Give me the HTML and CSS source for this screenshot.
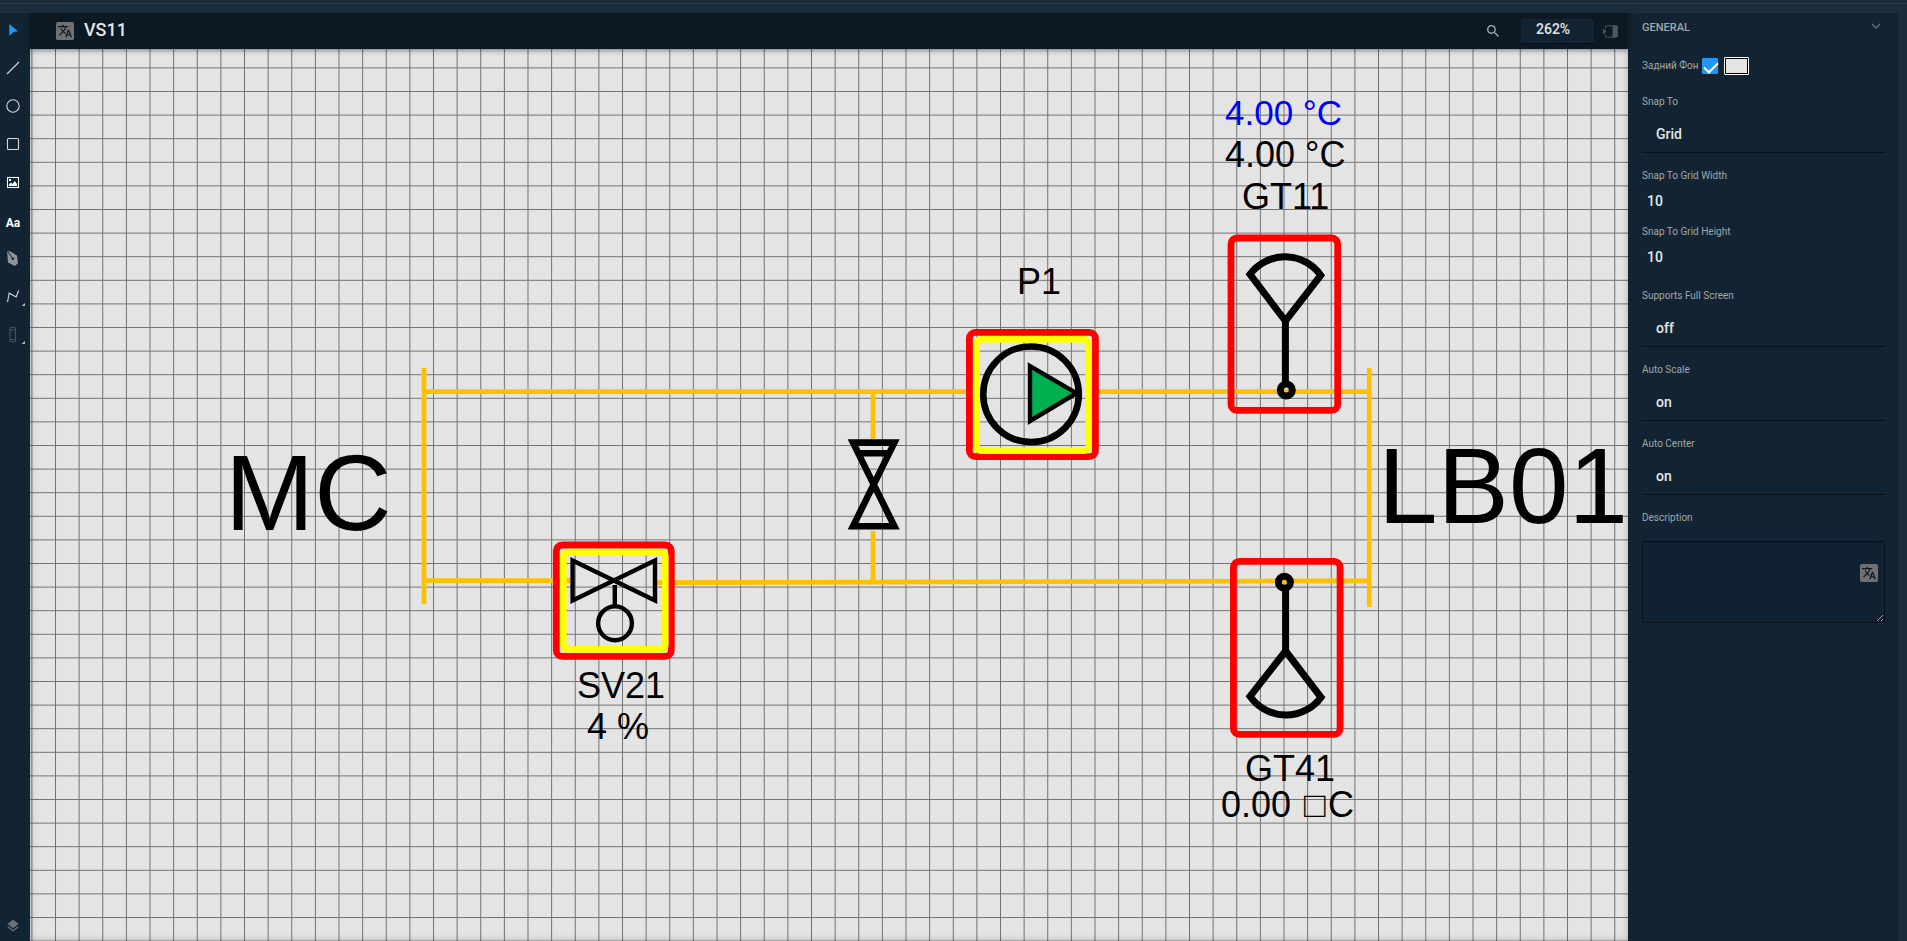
FILE: index.html
```html
<!DOCTYPE html>
<html lang="en">
<head>
<meta charset="utf-8">
<title>VS11</title>
<link rel="stylesheet" href="styles.css">
</head>
<body>
<svg class="defs" aria-hidden="true">
  <symbol id="translate" viewBox="0 0 24 24">
    <rect class="translate-bg" width="24" height="24" rx="2.5"/>
    <path transform="translate(2 2) scale(.84)" d="M12.87 15.07l-2.54-2.51.03-.03c1.74-1.94 2.98-4.17 3.71-6.53H17V4h-7V2H8v2H1v1.99h11.17C11.5 7.92 10.44 9.75 9 11.35 8.07 10.32 7.3 9.19 6.69 8h-2c.73 1.63 1.73 3.17 2.98 4.56l-5.09 5.02L4 19l5-5 3.11 3.11.76-2.04zM18.5 10h-2L12 22h2l1.12-3h4.75L21 22h2l-4.5-12zm-2.62 7l1.62-4.33L19.12 17h-3.24z"/>
  </symbol>
</svg>
<div class="top-strip"></div>
<div class="editor">
  <nav class="tools" aria-label="Tools">
    <button class="tool" aria-label="Select"><svg viewBox="0 0 30 30"><path class="accent" d="M9.3 9L18 16.2L13.6 17L9.3 20.8Z"/></svg></button>
    <button class="tool" aria-label="Line"><svg viewBox="0 0 30 30"><path class="stroke" d="M7 21L19 9"/></svg></button>
    <button class="tool" aria-label="Ellipse"><svg viewBox="0 0 30 30"><circle class="stroke" cx="13" cy="15" r="6.2"/></svg></button>
    <button class="tool" aria-label="Rectangle"><svg viewBox="0 0 30 30"><rect class="stroke" x="7.5" y="9.5" width="11" height="11" rx="1"/></svg></button>
    <button class="tool" aria-label="Image"><svg viewBox="0 0 30 30"><rect class="stroke strong" x="7.5" y="10.5" width="11" height="10"/><path class="solid" d="M9 19V17.5L11 15.5L12.5 17L14.8 14L17 17V19ZM9 12h2v2h-2z"/></svg></button>
    <button class="tool tool-text" aria-label="Text">Aa</button>
    <button class="tool" aria-label="Pen"><svg viewBox="0 0 30 30"><path class="muted" d="M7.2 7.6L9.6 7L17 11.6L18 19.2L14.8 22L8 18.6Z"/><path class="cut" d="M8 7.8L12.6 14.4"/><circle class="cut-dot" cx="12.8" cy="14.8" r="1.3"/></svg></button>
    <button class="tool" aria-label="Polyline"><svg viewBox="0 0 30 30"><path class="stroke" d="M7.5 20L9.2 11.2L16.2 15L18.6 8.5"/><path class="corner" d="M25 21V24H21.5Z"/></svg></button>
    <button class="tool" aria-label="Pipe"><svg viewBox="0 0 30 30"><rect class="stroke dim" x="10" y="7.5" width="5.5" height="14.5" rx="1.5"/><path class="stroke dim" d="M10 10H15.5M10 19.5H15.5"/><path class="corner" d="M25 21V24H21.5Z"/></svg></button>
    <button class="tool tool-last" aria-label="Layers"><svg viewBox="0 0 30 30"><path class="layer" d="M13 8.5L18.5 13L13 17.3L7.5 13Z"/><path class="layer-line" d="M7.8 15.8L13 19.8L18.2 15.8"/></svg></button>
  </nav>
  <main class="workspace">
    <header class="bar">
      <svg class="translate"><use href="#translate"/></svg>
      <h1 class="title">VS11</h1>
      <button class="search" aria-label="Search"><svg viewBox="3 3 17.5 17.5"><path d="M15.5 14h-.79l-.28-.27C15.41 12.59 16 11.11 16 9.5 16 5.91 13.09 3 9.5 3S3 5.91 3 9.5 5.91 16 9.5 16c1.61 0 3.09-.59 4.23-1.57l.27.28v.79l5 4.99L20.49 19l-4.99-5zm-6 0C7.01 14 5 11.99 5 9.5S7.01 5 9.5 5 14 7.01 14 9.5 11.99 14 9.5 14z"/></svg></button>
      <input class="zoom" type="text" value="262%" aria-label="Zoom">
      <button class="dock" aria-label="Toggle panel"><svg viewBox="0 0 15 13"><path class="dock-frame" d="M2.5 3.5V1.5Q2.5 .8 3.5 .8H13Q14.2 .8 14.2 2V11Q14.2 12.2 13 12.2H3.5Q2.5 12.2 2.5 11.5V9.5"/><path class="dock-fill" d="M9.5 1h5v11h-5zM0 3.5l3.5 3L0 9.5z"/></svg></button>
    </header>
    <div class="canvas">
      <svg class="drawing" role="img" aria-label="Heating circuit VS11">
        <defs>
          <pattern id="grid" width="10" height="10" patternUnits="userSpaceOnUse" patternTransform="translate(25 42) scale(2.3625 2.36)">
            <path class="grid-line" d="M0 .212H10M.212 0V10"/>
          </pattern>
        </defs>
        <rect width="100%" height="100%" fill="url(#grid)"/>
        <g transform="translate(-30 -49)">
          <g class="pipe">
            <path d="M424 391.7H968M1097 391.7H1369M424 580.7H572M657 582.7L1180 581.3L1369 580.7M873 392V440M873 531V582M424 368V604.3M1369.3 368V607"/>
          </g>
          <g class="ink">
            <path class="w65" d="M853 442.6H894.4L853 526.3H894.4ZM859 453.3H888"/>
          </g>
          <g>
            <rect class="frame-red" x="556.3" y="545" width="115" height="111.4" rx="6"/>
            <rect class="frame-yellow" x="563.3" y="552" width="102" height="97.4" rx="4"/>
            <path class="pipe" d="M566.7 580.7H571"/>
            <g class="ink w43"><path d="M572.6 560.6V600.4L655 560.6V600.4ZM614.8 585V606"/><circle cx="615" cy="623.3" r="16.9"/></g>
          </g>
          <g>
            <rect class="frame-red" x="969.4" y="332.3" width="126" height="124.4" rx="6"/>
            <rect class="frame-yellow" x="976.6" y="339.4" width="112" height="111.3" rx="4"/>
            <circle class="ink w65" cx="1031" cy="394.3" r="47.8"/>
            <path class="rotor" d="M1030 366V421L1076.5 393.2Z"/>
          </g>
          <g>
            <rect class="frame-red" x="1231" y="238" width="106.7" height="172.4" rx="6"/>
            <path class="ink w7" d="M1285.4 321L1250 274.3A43.7 43.7 0 0 1 1320.7 275.3ZM1285.4 320V384"/>
            <circle class="ink w7" cx="1286.3" cy="390" r="6"/>
          </g>
          <g>
            <rect class="frame-red" x="1233.4" y="561.4" width="106.7" height="173" rx="6"/>
            <path class="ink w7" d="M1285.6 651L1250 696.3A43.7 43.7 0 0 0 1321 697.3ZM1285.6 652V589"/>
            <circle class="ink w7" cx="1284.4" cy="582.3" r="6"/>
          </g>
          <g class="label">
            <text class="setpoint" x="1225" y="125">4.00 °C</text>
            <text x="1225" y="167">4.00 °C</text>
            <text x="1242" y="209">GT11</text>
            <text x="1017" y="294">P1</text>
            <text x="577" y="698">SV21</text>
            <text x="587" y="739">4 %</text>
            <text x="1245" y="781">GT41</text>
            <text x="1221" y="817">0.00 <tspan x="1304">□</tspan><tspan x="1328">C</tspan></text>
          </g>
          <g class="label label-big">
            <text x="225" y="530">MC</text>
            <text x="1378" y="523">LB01</text>
          </g>
        </g>
      </svg>
    </div>
  </main>
  <aside class="panel">
    <div class="panel-head">
      <h2 class="panel-title">GENERAL</h2>
      <button class="collapse" aria-label="Collapse"><svg viewBox="0 0 10 6"><path d="M1 1L5 5L9 1"/></svg></button>
    </div>
    <div class="bg-row">
      <label for="bg-on">Задний Фон</label>
      <input class="check" id="bg-on" type="checkbox" checked>
      <input class="swatch" type="color" value="#e4e4e4" aria-label="Background colour">
    </div>
    <div class="field">
      <label for="snap">Snap To</label>
      <select id="snap"><option>Grid</option></select>
    </div>
    <div class="field number">
      <label for="gw">Snap To Grid Width</label>
      <input id="gw" type="text" value="10">
    </div>
    <div class="field number last">
      <label for="gh">Snap To Grid Height</label>
      <input id="gh" type="text" value="10">
    </div>
    <div class="field">
      <label for="full">Supports Full Screen</label>
      <select id="full"><option>off</option></select>
    </div>
    <div class="field">
      <label for="scale">Auto Scale</label>
      <select id="scale"><option>on</option></select>
    </div>
    <div class="field">
      <label for="center">Auto Center</label>
      <select id="center"><option>on</option></select>
    </div>
    <div class="field">
      <label for="desc">Description</label>
      <div class="area">
        <textarea id="desc"></textarea>
        <svg class="translate area-icon"><use href="#translate"/></svg>
      </div>
    </div>
  </aside>
</div>
</body>
</html>
```
FILE: styles.css
```css
* { box-sizing: border-box; }

body {
  margin: 0;
  min-height: 100vh;
  display: flex;
  flex-direction: column;
  background: #1b2d3b;
  color: #e4e7e9;
  font: 500 14px/20px Roboto, sans-serif;
}

button {
  padding: 0;
  border: 0;
  background: none;
  color: inherit;
  font: inherit;
}

.defs { position: absolute; width: 0; height: 0; }

.top-strip {
  height: 13px;
  padding-top: 3px;
}
.top-strip::before {
  content: "";
  display: block;
  height: 1px;
  background: #2c3e4b;
}

.editor {
  flex: 1;
  display: flex;
  padding-right: 9px;
}

/* tools */
.tools {
  width: 30px;
  padding-top: 2px;
  display: flex;
  flex-direction: column;
  gap: 8px;
  background: #122431;
}
.tool { height: 30px; }
.tool svg { display: block; width: 30px; height: 30px; }
.tool-text {
  height: 31px;
  padding: 4px 4px 0 0;
  color: #fff;
  font-size: 12px;
  font-weight: 700;
}
.tool-last { margin-top: auto; }
.accent { fill: #2196f3; }
.stroke { fill: none; stroke: #d5d9dc; stroke-width: 1.1; }
.strong { stroke: #fff; }
.solid { fill: #fff; }
.muted { fill: #8d959b; }
.cut { stroke: #122431; stroke-width: 1; }
.cut-dot { fill: #122431; }
.corner { fill: #b4babe; }
.dim { stroke: #46545f; }
.layer { fill: #66727b; }
.layer-line { fill: none; stroke: #66727b; stroke-width: 1.3; }

/* header */
.workspace {
  flex: 1;
  min-width: 0;
  display: flex;
  flex-direction: column;
}
.bar {
  position: relative;
  height: 36px;
  padding: 0 10px 0 26px;
  display: flex;
  align-items: center;
  background: #0c1822;
  box-shadow: 0 1px 5px rgba(0, 0, 0, .35);
}
.translate { width: 18px; height: 18px; fill: #0c1822; }
.translate-bg { fill: #6e7071; }
.bar .translate { margin-top: -1px; }
.title {
  flex: 1;
  margin: 0 0 2px 10px;
  font-size: 18px;
  font-weight: 500;
}
.search svg {
  display: block;
  width: 12px;
  height: 12px;
  fill: #a4a9ad;
}
.zoom {
  width: 73px;
  height: 25px;
  margin: 0 9px 0 22px;
  padding: 0 15px 3px;
  border: 0;
  border-bottom: 1px solid #060d13;
  border-radius: 3px 3px 0 0;
  background: #122431;
  color: inherit;
  font: inherit;
}
.dock svg { display: block; width: 15px; height: 13px; }
.dock-frame { fill: none; stroke: #4f585f; }
.dock-fill { fill: #4f585f; }

/* drawing */
.canvas {
  flex: 1;
  display: flex;
  background: #e4e4e4;
  box-shadow: inset 0 0 7px rgba(0, 0, 0, .25);
}
.drawing { display: block; width: 100%; flex: 1; }
.grid-line { fill: none; stroke: #000; stroke-opacity: .5; stroke-width: .42; }
.pipe { fill: none; stroke: #ffc000; stroke-width: 4.7; }
.ink { fill: none; stroke: #000; }
.w43 { stroke-width: 4.4; }
.w65 { stroke-width: 6.6; }
.w7 { stroke-width: 7; }
.frame-red { fill: none; stroke: #f00; stroke-width: 6.8; }
.frame-yellow { fill: none; stroke: #ff0; stroke-width: 6.6; }
.rotor { fill: #00b050; stroke: #000; stroke-width: 4.4; }
.label { font: 400 36px "Liberation Sans", Arial, sans-serif; fill: #000; }
.setpoint { font-size: 35px; fill: #00f; }
.label-big { font-size: 107px; }

/* properties */
.panel {
  width: 270px;
  padding: 6px 13px 0 14px;
  background: #122431;
}
.panel-head {
  height: 18px;
  display: flex;
  align-items: center;
  justify-content: space-between;
}
.panel-title {
  margin: 0;
  color: #a0a7ad;
  font-size: 11px;
  font-weight: 500;
}
.collapse { padding: 0 4px 4px 0; }
.collapse svg {
  display: block;
  width: 10px;
  height: 6px;
  fill: none;
  stroke: #66727b;
  stroke-width: 1.3;
}
.bg-row {
  height: 18px;
  margin: 20px 0 19px;
  display: flex;
  align-items: center;
}
.panel label {
  display: block;
  color: #a0a7ad;
  font-size: 10px;
  font-weight: 400;
  line-height: 16px;
}
.check {
  appearance: none;
  width: 16px;
  height: 16px;
  margin: 0 6px 0 4px;
  border-radius: 1px;
  background: #2196f3;
}
.check:checked::before {
  content: "";
  display: block;
  width: 12px;
  height: 6px;
  margin: 4px 0 0 2px;
  border: solid #fff;
  border-width: 0 0 2px 2px;
  transform: rotate(-45deg);
}
.swatch {
  appearance: none;
  width: 25px;
  height: 18px;
  padding: 0;
  border: 1px solid #fff;
  border-radius: 1px;
  background: #000;
}
.swatch::-webkit-color-swatch-wrapper { padding: 0; }
.swatch::-webkit-color-swatch { border: 1px solid #000; border-radius: 0; }

.field { margin-bottom: 15px; }
.field.number { margin-bottom: 10px; }
.field.last { margin-bottom: 18px; }
.panel select,
.field input,
.panel textarea {
  display: block;
  width: 100%;
  border: 0;
  background: transparent;
  color: inherit;
  font: inherit;
}
.panel select {
  appearance: none;
  height: 37px;
  margin-top: 6px;
  padding: 0 14px;
  border-bottom: 1px solid #09121a;
  border-radius: 0;
}
.field input {
  height: 26px;
  margin-top: 4px;
  padding: 0 5px;
}
.area { position: relative; margin-top: 15px; }
.panel textarea {
  height: 82px;
  padding: 8px;
  border: 1px solid #07101a;
  border-radius: 3px;
  background: #102132;
}
.area-icon {
  position: absolute;
  top: 23px;
  right: 7px;
}
```
